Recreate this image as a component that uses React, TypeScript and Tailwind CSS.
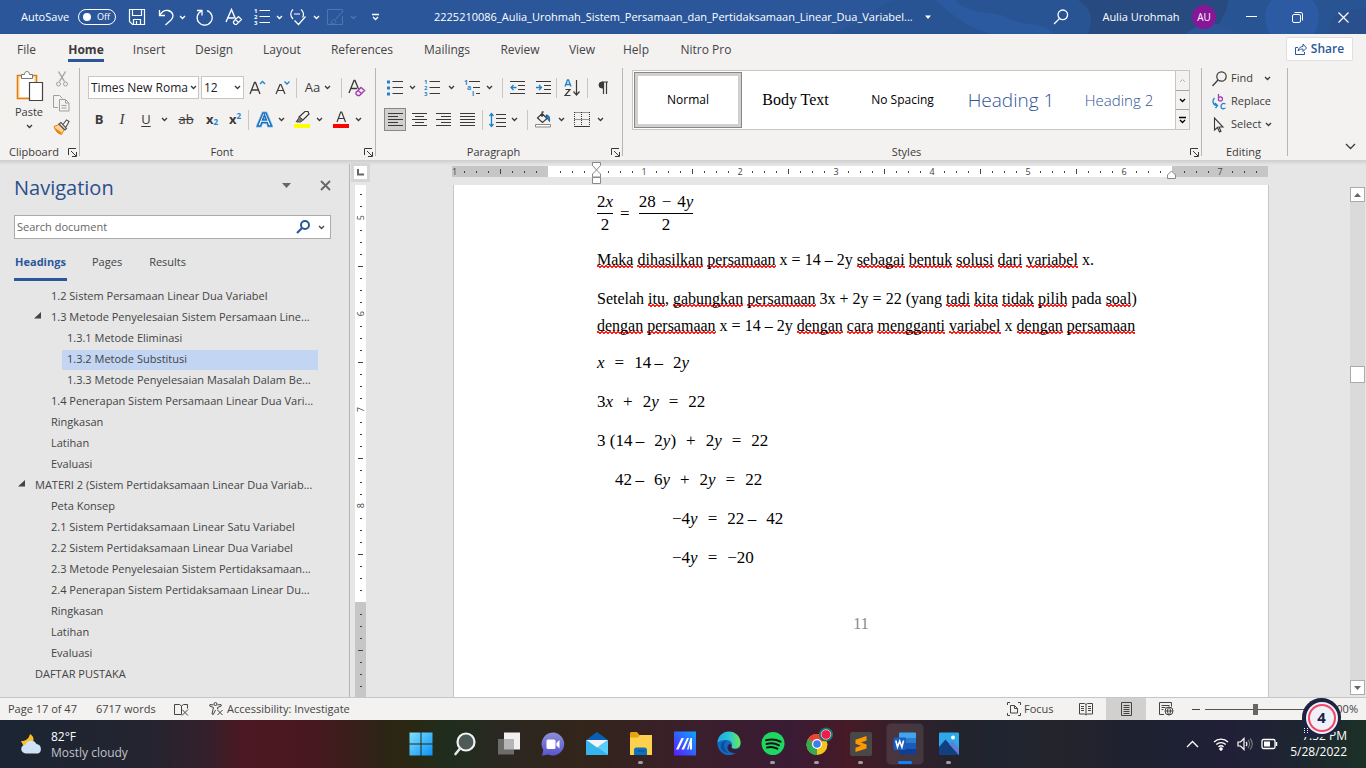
import React from "react";

type Kids = { children?: React.ReactNode };

function Svg({ w, h, children, className = "" }: { w: number; h: number; className?: string } & Kids) {
  return (
    <svg
      width={w}
      height={h}
      viewBox={`0 0 ${w} ${h}`}
      fill="none"
      stroke="currentColor"
      strokeWidth={1}
      className={`shrink-0 ${className}`}
      aria-hidden="true"
    >
      {children}
    </svg>
  );
}

function Chevron() {
  return (
    <Svg w={7} h={5}>
      <path d="M1 1l2.5 2.5L6 1" strokeWidth={1.3} />
    </Svg>
  );
}

function Btn({ label, className = "", children }: { label: string; className?: string } & Kids) {
  return (
    <button type="button" aria-label={label} className={`flex shrink-0 items-center justify-center ${className}`}>
      {children}
    </button>
  );
}

function More({ label, className = "w-2.5" }: { label: string; className?: string }) {
  return (
    <Btn label={label} className={`h-6 ${className}`}>
      <Chevron />
    </Btn>
  );
}

function Sep() {
  return <span className="h-5 w-px shrink-0 bg-[#c8c6c4]" />;
}

/* ---------- Title bar ---------- */

function TitleBar() {
  return (
    <header className="relative flex h-[34px] shrink-0 items-center overflow-hidden bg-[#2b579a] text-[11px] text-white">
      <svg className="absolute inset-y-0 right-0 h-full w-[560px]" viewBox="0 0 560 34" aria-hidden="true">
        <path d="M0 0h560v34H20C70 20 60 8 90 0z" fill="#29528f" opacity=".45" />
        <path d="M282 34c6-16 4-24-10-34h150c0 14-10 20-12 34z" fill="#274b80" />
        <circle cx="486" cy="18" r="27" fill="#2c5aa3" />
        <path d="M380 34c10-10 28-14 44-6l6 6z" fill="#2b5597" />
        <path d="M522 34c0-18 14-24 38-26v26z" fill="#29508d" />
        <path d="M150 0c10 16 40 10 52 18 10 8 40 4 44 16h-60C160 28 140 10 130 0z" fill="#2c5aa0" />
      </svg>
      <div className="relative flex h-full w-full items-center">
        <label className="flex shrink-0 items-center pl-[21px]">
          <span className="w-[57px]">AutoSave</span>
          <input type="checkbox" className="sr-only" />
          <span className="flex h-4 w-[38px] items-center gap-1.5 rounded-full border border-white pl-1 text-[9px]">
            <span className="size-2 rounded-full bg-white" />
            Off
          </span>
        </label>
        <Btn label="Save" className="h-7 w-[42px]">
          <Svg w={18} h={18}>
            <path d="M1.5 1.5h15v15h-12l-3-3zM4.500 1.500v6h9v-6M5.500 16.500v-5h7v5M8.500 16v-3" strokeWidth={1.2} />
          </Svg>
        </Btn>
        <Btn label="Undo" className="h-7 w-4">
          <Svg w={16} h={18}>
            <path d="M1.500 2v5.500H7M1.500 7.500C4 3.500 7 2 10 2.500c5 1 6.500 6 3 9.500L7.500 17" strokeWidth={1.3} />
          </Svg>
        </Btn>
        <More label="Undo options" className="w-4" />
        <Btn label="Repeat" className="h-7 w-7">
          <Svg w={18} h={18}>
            <path d="M2 2.500h5v5M6.800 2.800A7.500 7.500 0 1 0 12 2.600" strokeWidth={1.3} />
          </Svg>
        </Btn>
        <Btn label="Clear formatting" className="h-7 w-8">
          <Svg w={18} h={18}>
            <path d="M1 14L6.500 1.500 10.500 11M3 10h6" strokeWidth={1.4} />
            <path d="M8.500 13.500l5-5 3 3-5 5H10l-1.500-1.500zM10.500 11.500l3 3" strokeWidth={1.2} />
          </Svg>
        </Btn>
        <Btn label="Numbering" className="h-7 w-6">
          <NumberedGlyph accent="#fff" />
        </Btn>
        <More label="Numbering options" />
        <Btn label="Check" className="h-7 w-[27px]">
          <Svg w={18} h={18}>
            <path d="M4 1.500C1 4 1 8 4 11M12 1.500c3 2.500 3 6 1.500 8M5 6h6M5.500 12.500l4 4 7-8" strokeWidth={1.2} />
          </Svg>
        </Btn>
        <More label="Check options" />
        <div className="flex text-[#4d75b0]">
          <Btn label="Draw" className="h-7 w-7">
            <Svg w={18} h={18}>
              <path d="M16.500 8v8.500h-15v-15h15v3M16.500 3.500l-7 8M5 16c0-3 2-5 4-4s1 4-4 4z" />
            </Svg>
          </Btn>
          <More label="Draw options" className="h-7 w-2" />
        </div>
        <Btn label="Customize toolbar" className="h-7 w-[37px]">
          <Svg w={9} h={8}>
            <path d="M1 1.500h7M2 4l2.500 2.500L7 4" strokeWidth={1.3} />
          </Svg>
        </Btn>
        <button type="button" className="flex min-w-0 flex-1 items-center gap-3 pl-10">
          <span className="truncate">2225210086_Aulia_Urohmah_Sistem_Persamaan_dan_Pertidaksamaan_Linear_Dua_Variabel...</span>
          <Svg w={7} h={5}>
            <path d="M0 0.500h6L3 4z" fill="currentColor" stroke="none" />
          </Svg>
        </button>
        <Btn label="Search" className="h-7 w-8">
          <Svg w={16} h={16}>
            <circle cx="9.800" cy="5.800" r="4.800" strokeWidth={1.300} />
            <path d="M6.500 9.500L1 15" strokeWidth={1.300} />
          </Svg>
        </Btn>
        <button type="button" className="flex shrink-0 items-center gap-[11px] pr-3 pl-6">
          <span className="w-20 whitespace-nowrap">Aulia Urohmah</span>
          <span className="flex size-6 items-center justify-center rounded-full bg-[#881798] text-[10px]">AU</span>
        </button>
        <Btn label="Minimize" className="h-full w-[46px]">
          <Svg w={11} h={11}>
            <path d="M0 4.500h11" strokeWidth={1} />
          </Svg>
        </Btn>
        <Btn label="Restore" className="h-full w-[46px]">
          <Svg w={11} h={11}>
            <path d="M.5 4a1.500 1.500 0 0 1 1.500-1.500h5A1.500 1.500 0 0 1 8.500 4v5A1.500 1.500 0 0 1 7 10.500H2A1.500 1.500 0 0 1 .5 9zM2.500.5H9A1.500 1.500 0 0 1 10.500 2v6.500" />
          </Svg>
        </Btn>
        <Btn label="Close" className="h-full w-[46px]">
          <Svg w={11} h={11}>
            <path d="M.5.5l10 10M10.500.5l-10 10" strokeWidth={1.200} />
          </Svg>
        </Btn>
      </div>
    </header>
  );
}

/* ---------- Ribbon tabs ---------- */

const tabs: [string, string][] = [
  ["File", "w-[53px]"],
  ["Home", "w-[66px]"],
  ["Insert", "w-[60px]"],
  ["Design", "w-[70px]"],
  ["Layout", "w-[66px]"],
  ["References", "w-[94px]"],
  ["Mailings", "w-[76px]"],
  ["Review", "w-[70px]"],
  ["View", "w-[54px]"],
  ["Help", "w-[54px]"],
  ["Nitro Pro", "w-[86px]"],
];

function RibbonTabs() {
  return (
    <nav className="flex h-8 shrink-0 items-start text-[12px]">
      {tabs.map(([name, width]) => (
        <button type="button" key={name} className={`flex h-8 shrink-0 justify-center ${width}`}>
          <span className={`h-7 pt-[7px] ${name === "Home" ? "border-b-[3px] border-[#2b579a] font-bold text-[#3b3a39]" : ""}`}>
            {name}
          </span>
        </button>
      ))}
      <button
        type="button"
        className="mt-[3px] mr-[13px] ml-auto flex h-6 w-[67px] items-center justify-center gap-1 rounded-xs border border-[#e1dfdd] bg-white font-semibold text-[#2b579a]"
      >
        <Svg w={12} h={12}>
          <path d="M3 4.500H.5v7h9V9M3 8c.5-3 2.500-4.500 5-4.500V1l3.500 4L8 8.500V6C6 6 4.500 6.500 3 8z" />
        </Svg>
        Share
      </button>
    </nav>
  );
}

/* ---------- Ribbon ---------- */

function Group({
  title,
  launcher = true,
  className = "",
  children,
}: { title: string; launcher?: boolean; className?: string } & Kids) {
  return (
    <section className={`flex flex-col ${className}`}>
      <div className="min-h-0 flex-1">{children}</div>
      <div className="flex h-4 items-center pr-0.5">
        <span className={`flex-1 text-center whitespace-nowrap ${launcher ? "-mr-1" : ""}`}>{title}</span>
        {launcher && (
          <button type="button" aria-label={`${title} settings`} className="ml-1">
            <Svg w={9} h={9}>
              <path d="M.5 7V.5H8M3 3l5 5M8.500 4v4.500H4" />
            </Svg>
          </button>
        )}
      </div>
    </section>
  );
}

function Divider() {
  return <span className="mt-0.5 h-[88px] w-px shrink-0 bg-[#b8b6b4]" />;
}

function NumberedGlyph({ accent }: { accent: string }) {
  return (
    <svg width="17" height="20" viewBox="0 0 17 20" aria-hidden="true">
      <path d="M5.500 3.500H16M5.500 9.500H16M5.500 15.500H16" stroke="currentColor" />
      <g fill={accent} fontSize="6" fontWeight="bold" fontFamily="Open Sans, sans-serif">
        <text x="0" y="6">1</text>
        <text x="0" y="12">2</text>
        <text x="0" y="18">3</text>
      </g>
    </svg>
  );
}

function Lines({ xs }: { xs: [number, number][] }) {
  return (
    <Svg w={15} h={15}>
      {xs.map(([a, b], i) => (
        <path key={i} d={`M${a} ${i * 3 + 1.5}H${b}`} />
      ))}
    </Svg>
  );
}

function Eraser() {
  return (
    <Svg w={18} h={18}>
      <path d="M1 14L6 1.500h1L10.500 10M3 9.500h6" strokeWidth={1.300} />
      <path d="M8 13.500l5-5 3.500 3-5 5H9.500L8 15zM10 11.500l3.500 3" stroke="#a43cb0" strokeWidth={1.400} />
    </Svg>
  );
}

function ClipboardGroup() {
  return (
    <Group title="Clipboard" className="w-[79px]">
      <div className="flex h-full">
        <button type="button" className="flex w-[58px] flex-col items-center pt-1">
          <Svg w={30} h={34}>
            <path d="M3.500 5.500h19v23h-19z" fill="#fce8c4" stroke="#e27f0c" strokeWidth={1.600} />
            <path d="M6 8h14v19H6z" fill="#fff" stroke="none" />
            <path d="M7.500 8.500v-4h3c0-4 5-4 5 0h3v4z" fill="#fff" stroke="#777" />
            <path d="M15.500 12.500h13v18h-13z" fill="#fff" stroke="#444" strokeWidth={1.200} />
          </Svg>
          <span className="leading-4">Paste</span>
          <span className="flex h-3 items-center">
            <Chevron />
          </span>
        </button>
        <div className="flex w-[7px] flex-col items-center gap-1.5 pt-1 text-[#a19f9d]">
          <Btn label="Cut" className="h-[18px] w-5">
            <Svg w={12} h={16}>
              <path d="M2.500.5l6 10M9.500.5l-6 10" strokeWidth={1.300} />
              <circle cx="2.500" cy="13" r="2" />
              <circle cx="9.500" cy="13" r="2" />
            </Svg>
          </Btn>
          <Btn label="Copy" className="h-[18px] w-5">
            <Svg w={17} h={17}>
              <path d="M5 12.500H.5V.5h6l3 3M6.500 4.500h6l3.500 3.500v8H6.500zM12.500 4.500V8H16M8.500 10.500h5M8.500 13h5" />
            </Svg>
          </Btn>
          <Btn label="Format Painter" className="h-[18px] w-5">
            <Svg w={17} h={16}>
              <path d="M1 7.500l5-2 5 5.500-2.500 4.500C5 14.500 2 11.500 1 7.500z" fill="#fbd59b" stroke="#e27f0c" />
              <path d="M2 9l6.500 4.500-1 2C4 14 2.500 12 2 9z" fill="#e8820c" stroke="none" />
              <path d="M6 5l2-1.500 5.500 6L12 11zM10 5.500l3.500-4.500 2.500 1.500-3 5.500" fill="#fff" stroke="#555" strokeWidth={1.200} />
            </Svg>
          </Btn>
        </div>
      </div>
    </Group>
  );
}

function FontGroup() {
  return (
    <Group title="Font" className="w-[295px]">
      <div className="flex h-8 items-center pt-[11px] pl-2">
        <label className="relative flex h-[23px] w-28 items-center">
          <span className="sr-only">Font name</span>
          <select className="h-[23px] w-[111px] appearance-none border border-[#c8c6c4] bg-white pl-0.5 text-[12px] leading-4 text-[#222]">
            <option>Times New Roma</option>
          </select>
          <span className="pointer-events-none absolute right-[3px] bg-white">
            <Chevron />
          </span>
        </label>
        <label className="relative ml-px flex h-[23px] w-[43px] items-center">
          <span className="sr-only">Font size</span>
          <select className="h-[23px] w-[43px] appearance-none border border-[#c8c6c4] bg-white pl-0.5 text-[12px] leading-4 text-[#222]">
            <option>12</option>
          </select>
          <span className="pointer-events-none absolute right-[3px]">
            <Chevron />
          </span>
        </label>
        <Btn label="Grow font" className="h-6 w-[26px]">
          <Svg w={17} h={16}>
            <path d="M1 14L5.500 2.500h1L11 14M2.800 10h6.500" strokeWidth={1.300} />
            <path d="M11 4l2.500-2.500L16 4" stroke="#1e83cc" strokeWidth={1.300} />
          </Svg>
        </Btn>
        <Btn label="Shrink font" className="h-6 w-6">
          <Svg w={15} h={16}>
            <path d="M1 14L5 4.500h1L10 14M2.800 10.500h5.500" strokeWidth={1.200} />
            <path d="M9.500 1.500L12 4l2.500-2.500" stroke="#1e83cc" strokeWidth={1.300} />
          </Svg>
        </Btn>
        <span className="w-0.5" />
        <Sep />
        <button type="button" className="flex h-6 w-[42px] items-center justify-center gap-1 text-[13px]">
          Aa
          <Chevron />
        </button>
        <span className="w-0.5" />
        <Sep />
        <Btn label="Clear all formatting" className="h-6 w-[30px]">
          <Eraser />
        </Btn>
      </div>
      <div className="flex h-8 items-center pt-[11px] pl-2 text-[13px]">
        <Btn label="Bold" className="h-6 w-[22px] font-bold">B</Btn>
        <Btn label="Italic" className="h-6 w-6">
          <span className="font-['Liberation_Serif',serif] text-[15px] italic">I</span>
        </Btn>
        <Btn label="Underline" className="h-6 w-6">
          <span className="underline underline-offset-2">U</span>
        </Btn>
        <More label="Underline style" className="w-3" />
        <Btn label="Strikethrough" className="h-6 w-8">
          <span className="line-through">ab</span>
        </Btn>
        <Btn label="Subscript" className="h-6 w-5 font-bold">
          x<sub className="text-[8px] text-[#1e83cc]">2</sub>
        </Btn>
        <Btn label="Superscript" className="h-6 w-[26px] font-bold">
          x<sup className="text-[8px] text-[#1e83cc]">2</sup>
        </Btn>
        <Sep />
        <span className="w-0.5" />
        <Btn label="Text effects" className="h-6 w-[26px]">
          <Svg w={17} h={17}>
            <path d="M1.500 15L7 2h3l5.500 13h-3l-1.300-3.500H5.800L4.500 15zM6.500 9h4L8.500 4z" fill="#fff" stroke="#8cc4ee" strokeWidth={3} />
            <path d="M1.500 15L7 2h3l5.500 13h-3l-1.300-3.500H5.800L4.500 15zM6.500 9h4L8.500 4z" fill="#fff" stroke="#1b70b8" strokeWidth={1.500} />
          </Svg>
        </Btn>
        <More label="Text effects options" className="w-2" />
        <span className="w-[5px]" />
        <Btn label="Highlight" className="h-6 w-6">
          <Svg w={17} h={17}>
            <path d="M0 13h16v4H0z" fill="#ff0" stroke="none" />
            <path d="M2 11l2-2.500M5 6l6-5.500h3L15 3 9 9z" strokeWidth={1.200} />
            <path d="M4 8l1.500-2 3.500 3-2 2H3z" fill="#777" stroke="#555" />
          </Svg>
        </Btn>
        <More label="Highlight color" />
        <span className="w-[5px]" />
        <Btn label="Font color" className="h-6 w-6">
          <Svg w={17} h={17}>
            <path d="M0 13h16v4H0z" fill="#f00" stroke="none" />
            <path d="M4 11L7.700 1h1L12.500 11M5.300 7.500h6" strokeWidth={1.200} />
          </Svg>
        </Btn>
        <More label="Font color options" />
      </div>
    </Group>
  );
}

function ParagraphGroup() {
  const blue = "#1e83cc";
  return (
    <Group title="Paragraph" className="w-[246px]">
      <div className="flex h-8 items-center pt-[11px] pl-2">
        <Btn label="Bullets" className="h-6 w-[22px]">
          <Svg w={16} h={16}>
            <path d="M0 .5h3v3H0zM0 6.500h3v3H0zM0 12.500h3v3H0z" fill={blue} stroke="none" />
            <path d="M5.500 1.500H16M5.500 7.500H16M5.500 13.500H16" />
          </Svg>
        </Btn>
        <More label="Bullet options" className="w-3" />
        <Btn label="Numbering" className="h-6 w-7">
          <NumberedGlyph accent={blue} />
        </Btn>
        <More label="Numbering options" />
        <span className="w-1" />
        <Btn label="Multilevel list" className="h-6 w-6">
          <svg width="17" height="20" viewBox="0 0 17 20" aria-hidden="true">
            <path d="M5 3.500H16M9 9.500H16M12 15.500h4" stroke="currentColor" />
            <g fill={blue} fontSize="7" fontWeight="bold" fontFamily="Open Sans, sans-serif">
              <text x="0" y="7">1</text>
              <text x="3" y="12">a</text>
              <text x="8" y="18">i</text>
            </g>
          </svg>
        </Btn>
        <More label="Multilevel options" />
        <span className="w-2" />
        <Sep />
        <Btn label="Decrease indent" className="h-6 w-7">
          <Svg w={15} h={14}>
            <path d="M0 .5h15M8 4.500h7M8 8.500h7M0 12.500h15" />
            <path d="M6.500 6.500H1M3.500 4L1 6.500 3.500 9" stroke={blue} strokeWidth={1.300} />
          </Svg>
        </Btn>
        <Btn label="Increase indent" className="h-6 w-6">
          <Svg w={15} h={14}>
            <path d="M0 .5h15M8 4.500h7M8 8.500h7M0 12.500h15" />
            <path d="M0 6.500h5.500M3 4l2.500 2.500L3 9" stroke={blue} strokeWidth={1.300} />
          </Svg>
        </Btn>
        <span className="w-px" />
        <Sep />
        <Btn label="Sort" className="h-6 w-[30px]">
          <Svg w={17} h={18}>
            <path d="M1 7.500L3.500 1h1L7 7.500M2 5.500h4" stroke={blue} strokeWidth={1.300} />
            <path d="M1.500 10.500h4.500l-5 6h5.500M12.500 1v15M9.500 12.500l3 3.500 3-3.500" strokeWidth={1.200} />
          </Svg>
        </Btn>
        <Sep />
        <Btn label="Show paragraph marks" className="h-6 w-[30px]">
          <Svg w={10} h={14}>
            <path d="M5 7H4a3 3 0 0 1 0-6h1z" fill="currentColor" />
            <path d="M4 1h6M5.500 1v12M8.500 1v12" strokeWidth={1.200} />
          </Svg>
        </Btn>
      </div>
      <div className="flex h-8 items-center pt-[11px] pl-2">
        <Btn label="Align left" className="h-[23px] w-[22px] border border-[#8a8886] bg-[#d2d0ce]">
          <Lines xs={[[0, 15], [0, 10], [0, 15], [0, 10], [0, 15]]} />
        </Btn>
        <span className="w-px" />
        <Btn label="Center" className="h-6 w-6">
          <Lines xs={[[0, 15], [3, 12], [0, 15], [3, 12], [0, 15]]} />
        </Btn>
        <Btn label="Align right" className="h-6 w-6">
          <Lines xs={[[0, 15], [5, 15], [0, 15], [5, 15], [0, 15]]} />
        </Btn>
        <Btn label="Justify" className="h-6 w-6">
          <Lines xs={[[0, 15], [0, 15], [0, 15], [0, 15], [0, 15]]} />
        </Btn>
        <span className="w-[3px]" />
        <Sep />
        <span className="w-0.5" />
        <Btn label="Line spacing" className="h-6 w-6">
          <Svg w={17} h={16}>
            <path d="M7 2.500h10M7 6.500h10M7 10.500h10M7 14.500h10" />
            <path d="M2.500 1.500v13M.5 4l2-2.500 2 2.500M.5 12l2 2.500 2-2.500" stroke={blue} strokeWidth={1.300} />
          </Svg>
        </Btn>
        <More label="Line spacing options" />
        <span className="w-2" />
        <Sep />
        <span className="w-0.5" />
        <Btn label="Shading" className="h-6 w-[26px]">
          <Svg w={17} h={17}>
            <path d="M.5 13.500h15v2.500H.5z" fill="#fff" stroke="#888" />
            <path d="M7 2.500l5 5-4.500 4L2.500 7zM7 6V1.500c0-1 1.500-1 1.500 0" strokeWidth={1.200} />
            <path d="M11 4c3 0 4 2 3.500 6.500L12 7z" fill={blue} stroke="#1b5f99" />
          </Svg>
        </Btn>
        <More label="Shading options" />
        <span className="w-[3px]" />
        <Btn label="Borders" className="h-6 w-[26px]">
          <Svg w={16} h={16}>
            <path d="M.5.5h15M.5 7.500h15M.5 0v14M7.500 0v14M15.500 0v14" strokeDasharray="1 1" />
            <path d="M0 14.500h16" />
          </Svg>
        </Btn>
        <More label="Border options" />
      </div>
    </Group>
  );
}

function StylesGroup() {
  return (
    <Group title="Styles" className="min-w-0 flex-1">
      <div className="mt-1 mr-[11px] ml-[9px] flex h-[60px] border border-[#c8c6c4] bg-white text-[12px] text-black">
        <button type="button" className="m-px w-[108px] shrink-0 border border-[#8a8886] bg-[#d0d0d0] p-[3px]">
          <span className="flex h-full items-center justify-center bg-white">Normal</span>
        </button>
        <div className="flex min-w-0 flex-1 items-center overflow-hidden whitespace-nowrap">
          <button type="button" className="w-[105px] shrink-0 font-['Liberation_Serif',serif] text-[16px]">Body Text</button>
          <button type="button" className="w-[109px] shrink-0">No Spacing</button>
          <button type="button" className="w-[108px] shrink-0 text-[19px] font-light text-[#2f5496]">Heading 1</button>
          <button type="button" className="w-[108px] shrink-0 text-[15px] font-light text-[#2f5496]">Heading 2</button>
        </div>
        <div className="flex w-3.5 shrink-0 flex-col border-l border-[#c8c6c4] bg-[#f3f2f1]">
          <Btn label="Scroll up" className="flex-1 text-[#b3b0ad]">
            <Svg w={7} h={5}>
              <path d="M1 4l2.500-2.500L6 4" />
            </Svg>
          </Btn>
          <Btn label="Scroll down" className="flex-1 border-y border-[#a6a4a2]">
            <Chevron />
          </Btn>
          <Btn label="More styles" className="flex-1">
            <Svg w={7} h={8}>
              <path d="M0 1.500h7M1 4l2.500 2.500L6 4" strokeWidth={1.300} />
            </Svg>
          </Btn>
        </div>
      </div>
    </Group>
  );
}

function EditingGroup() {
  return (
    <Group title="Editing" launcher={false} className="w-[85px]">
      <div className="flex flex-col pt-px pl-2.5">
        <button type="button" className="flex h-[23px] items-center gap-1">
          <Svg w={15} h={16}>
            <circle cx="9.500" cy="5.500" r="4.700" strokeWidth={1.200} />
            <path d="M6 9L.5 15" strokeWidth={1.300} />
          </Svg>
          <span className="w-[29px] text-left">Find</span>
          <Chevron />
        </button>
        <button type="button" className="flex h-[23px] items-center gap-1">
          <Svg w={15} h={16}>
            <path d="M6.500 0v7M6.500 4c1-1.500 4-1.500 4 1s-3 2.500-4 1" stroke="#a43cb0" strokeWidth={1.300} />
            <path d="M2.500 4C0 6.500.5 11 5 11.500M3 9l2.500 2.500L3.500 14M13.500 10c-3-1.500-4.500.5-4.500 2.500s2 3 4.500 1.500" stroke="#1e83cc" strokeWidth={1.300} />
          </Svg>
          Replace
        </button>
        <button type="button" className="flex h-[23px] items-center gap-1">
          <Svg w={15} h={16}>
            <path d="M2.500 1v12l3-2.500 2 4.500 1.500-.8-2-4.200h4z" strokeWidth={1.100} />
          </Svg>
          <span>Select</span>
          <Chevron />
        </button>
      </div>
    </Group>
  );
}

/* ---------- Navigation pane ---------- */

type Entry = { text: string; level: "pl-[35px]" | "pl-[51px]" | "pl-[67px]"; open?: boolean; active?: boolean };

const outline: Entry[] = [
  { text: "1.2 Sistem Persamaan Linear Dua Variabel", level: "pl-[51px]" },
  { text: "1.3 Metode Penyelesaian Sistem Persamaan Line...", level: "pl-[51px]", open: true },
  { text: "1.3.1 Metode Eliminasi", level: "pl-[67px]" },
  { text: "1.3.2 Metode Substitusi", level: "pl-[67px]", active: true },
  { text: "1.3.3 Metode Penyelesaian Masalah Dalam Be...", level: "pl-[67px]" },
  { text: "1.4 Penerapan Sistem Persamaan Linear Dua Vari...", level: "pl-[51px]" },
  { text: "Ringkasan", level: "pl-[51px]" },
  { text: "Latihan", level: "pl-[51px]" },
  { text: "Evaluasi", level: "pl-[51px]" },
  { text: "MATERI 2 (Sistem Pertidaksamaan Linear Dua Variab...", level: "pl-[35px]", open: true },
  { text: "Peta Konsep", level: "pl-[51px]" },
  { text: "2.1 Sistem Pertidaksamaan Linear Satu Variabel", level: "pl-[51px]" },
  { text: "2.2 Sistem Pertidaksamaan Linear Dua Variabel", level: "pl-[51px]" },
  { text: "2.3 Metode Penyelesaian Sistem Pertidaksamaan...", level: "pl-[51px]" },
  { text: "2.4 Penerapan Sistem Pertidaksamaan Linear Du...", level: "pl-[51px]" },
  { text: "Ringkasan", level: "pl-[51px]" },
  { text: "Latihan", level: "pl-[51px]" },
  { text: "Evaluasi", level: "pl-[51px]" },
  { text: "DAFTAR PUSTAKA", level: "pl-[35px]" },
];

function NavigationPane() {
  return (
    <aside className="mt-1 flex w-[350px] shrink-0 flex-col border-r border-[#b5b5b5] text-[11px] text-[#444]">
      <div className="flex h-[51px] items-center pr-4 pb-1 pl-3.5">
        <h2 className="flex-1 text-[20px] leading-6 text-[#2b4f8c]">Navigation</h2>
        <Btn label="Pane options" className="mb-1 h-6 w-[45px] pr-4 text-[#666]">
          <Svg w={9} h={5}>
            <path d="M0 0h9L4.500 5z" fill="currentColor" stroke="none" />
          </Svg>
        </Btn>
        <Btn label="Close pane" className="mb-1 h-6 w-4 text-[#666]">
          <Svg w={11} h={11}>
            <path d="M1 1l9 9M10 1l-9 9" strokeWidth={1.800} />
          </Svg>
        </Btn>
      </div>
      <div className="mr-[18px] ml-3.5 flex h-6 shrink-0 items-center border border-[#ababab] bg-white pr-[3px]">
        <input
          type="search"
          aria-label="Search document"
          placeholder="Search document"
          className="min-w-0 flex-1 bg-transparent pl-0.5 outline-none placeholder:text-[#666]"
        />
        <Btn label="Search" className="w-6 text-[#2b579a]">
          <Svg w={15} h={14}>
            <circle cx="9" cy="5" r="4" strokeWidth={2} />
            <path d="M6 8l-5 5" strokeWidth={2.200} />
          </Svg>
        </Btn>
        <More label="Search options" className="w-3" />
      </div>
      <div className="flex h-[47px] shrink-0 items-end pb-[5px] pl-3.5">
        <button type="button" className="mr-[25px] h-[31px] w-[53px] border-b-[3px] border-[#2b579a] pb-1 font-bold whitespace-nowrap text-[#2b579a]">
          Headings
        </button>
        <button type="button" className="mr-[27px] h-[31px] border-b-[3px] border-transparent pb-1">Pages</button>
        <button type="button" className="h-[31px] border-b-[3px] border-transparent pb-1">Results</button>
      </div>
      <ul>
        {outline.map((e, i) => (
          <li key={i} className={`flex h-[21px] items-center ${e.level}`}>
            {e.open && (
              <span className="-ml-[17px] w-[17px]">
                <Svg w={8} h={7} className="mb-1">
                  <path d="M7 0v6.500H0z" fill="#444" stroke="none" />
                </Svg>
              </span>
            )}
            {e.active ? (
              <a href="#substitusi" className="mr-[31px] -ml-[5px] flex h-5 flex-1 items-center bg-[#c2d5f2] pl-[5px]">
                {e.text}
              </a>
            ) : (
              <a href="#outline" className="whitespace-nowrap">
                {e.text}
              </a>
            )}
          </li>
        ))}
      </ul>
    </aside>
  );
}

/* ---------- Document ---------- */

function rulerFill(i: number) {
  if (i === 8) return "w-3 justify-center bg-linear-to-r from-[#c6c6c6] from-50% to-white to-50%";
  if (i === 60) return "w-3 justify-center bg-linear-to-r from-white from-50% to-[#c6c6c6] to-50%";
  if (i === 0) return "w-1.5 justify-start bg-[#c6c6c6]";
  return i < 8 || i > 60 ? "w-3 justify-center bg-[#c6c6c6]" : "w-3 justify-center bg-white";
}

function HorizontalRuler() {
  const cells = Array.from({ length: 68 }, (_, i) => i);
  return (
    <div className="flex h-[25px] shrink-0 items-center justify-center pr-0.5 pb-0.5">
      <div className="relative flex h-[11px] text-[9px] text-[#444]">
        {cells.map((i) => {
          const n = i === 0 ? 1 : i % 8 === 0 && i > 8 ? i / 8 - 1 : null;
          return (
            <span key={i} className={`flex items-center ${rulerFill(i)}`}>
              {n !== null ? (
                n
              ) : i === 8 || i === 12 || i === 60 ? null : i % 4 === 0 ? (
                <span className="h-[5px] w-px bg-[#444]" />
              ) : (
                <span className="h-0.5 w-px bg-[#444]" />
              )}
            </span>
          );
        })}
        <span className="w-1.5 bg-[#c6c6c6]" />
        <Svg w={11} h={23} className="absolute -top-1 left-[139px] text-[#888]">
          <path d="M1.500.5h8v3L5.500 8l4 4v3h-8v-3l4-4-4-4.500zM1.500 15.500h8v6h-8z" fill="#fff" />
        </Svg>
        <Svg w={11} h={9} className="absolute top-1 right-[91px] text-[#888]">
          <path d="M1.500 8.500V5l4-4 4 4v3.500z" fill="#fff" />
        </Svg>
      </div>
    </div>
  );
}

function VerticalRuler() {
  const cells = Array.from({ length: 42 }, (_, i) => i);
  return (
    <div className="flex w-[21px] shrink-0 flex-col items-center">
      <div className="flex h-[25px] items-center">
        <button type="button" aria-label="Tab selector" className="flex size-[19px] items-center justify-center border-[3px] border-[#d6d6d6] bg-white">
          <Svg w={7} h={7} className="text-[#666]">
            <path d="M1 0v5.500h6" strokeWidth={2} />
          </Svg>
        </button>
      </div>
      <div className="flex min-h-0 w-[11px] flex-1 flex-col overflow-hidden bg-white pt-[3px] text-[9px] text-[#444]">
        {cells.map((i) => (
          <span
            key={i}
            className={`flex h-3 shrink-0 items-center justify-center ${i === 34 ? "bg-linear-to-b from-white from-50% to-[#c6c6c6] to-50%" : i > 34 ? "bg-[#c6c6c6]" : ""}`}
          >
            {i === 34 ? null : i % 8 === 2 ? (
              <span className="-rotate-90">{(i - 2) / 8 + 5}</span>
            ) : i % 8 === 6 ? (
              <span className="h-px w-[5px] bg-[#444]" />
            ) : (
              <span className="h-px w-0.5 bg-[#444]" />
            )}
          </span>
        ))}
        <span className="flex-1 bg-[#c6c6c6]" />
      </div>
    </div>
  );
}

/* Words wrapped in asterisks are flagged by the spelling checker. */
function Prose({ text }: { text: string }) {
  return (
    <>
      {text.split("*").map((part, i) =>
        i % 2 ? (
          <span
            key={i}
            className="bg-[linear-gradient(45deg,transparent_30%,#ff2020_30%,#ff2020_60%,transparent_60%),linear-gradient(135deg,transparent_30%,#ff2020_30%,#ff2020_60%,transparent_60%)] bg-[length:4px_3px,4px_3px] bg-[position:0_100%,2px_100%] bg-repeat-x"
          >
            {part}
          </span>
        ) : (
          <span key={i}>{part}</span>
        ),
      )}
    </>
  );
}

function Tokens({ parts }: { parts: string[] }) {
  return (
    <>
      {parts.map((p, i) => (
        <span key={i} className="whitespace-pre">
          {p.split(/([xy])/).map((c, k) => (c === "x" || c === "y" ? <em key={k}>{c}</em> : c))}
        </span>
      ))}
    </>
  );
}

function MathLine({ parts, className = "" }: { parts: string[]; className?: string }) {
  return (
    <p className={`flex h-7 items-center gap-2.5 ${className}`}>
      <Tokens parts={parts} />
    </p>
  );
}

function Fraction({ top, bottom }: { top: string[]; bottom: string }) {
  return (
    <span className="flex flex-col items-center leading-[22px]">
      <span className="flex gap-1.5 border-b border-black">
        <Tokens parts={top} />
      </span>
      <span>{bottom}</span>
    </span>
  );
}

function Page() {
  return (
    <article className="mx-auto flex w-[816px] flex-1 flex-col border-x border-[#c6c6c6] bg-white px-[143px] pt-1.5 font-['Liberation_Serif',serif] text-[16px] text-black">
      <div className="flex items-center gap-[7px] text-[17px]">
        <Fraction top={["2x"]} bottom="2" />
        <span>=</span>
        <span className="pl-0.5">
          <Fraction top={["28", "−", "4y"]} bottom="2" />
        </span>
      </div>
      <p className="mt-2.5 leading-7 whitespace-nowrap">
        <Prose text="*Maka* *dihasilkan* *persamaan* x = 14 – 2y *sebagai* *bentuk* *solusi* *dari* *variabel* x." />
      </p>
      <p className="mt-[11px] leading-[27px] whitespace-nowrap">
        <Prose text="Setelah *itu*, *gabungkan* *persamaan* 3x + 2y = 22 (yang *tadi* *kita* *tidak* *pilih* pada *soal*)" />
        <br />
        <Prose text="*dengan* *persamaan* x = 14 – 2y *dengan* *cara* *mengganti* *variabel* x *dengan* *persamaan*" />
      </p>
      <div className="mt-2.5 flex flex-col gap-[11px] text-[17px]">
        <MathLine parts={["x", "=", "14\u2009–", "2y"]} />
        <MathLine parts={["3x", "+", "2y", "=", "22"]} />
        <MathLine parts={["3 (14\u2009–", "2y)", "+", "2y", "=", "22"]} />
        <MathLine parts={["42\u2009–", "6y", "+", "2y", "=", "22"]} className="pl-[18px]" />
        <MathLine parts={["−4y", "=", "22\u2009–", "42"]} className="pl-[75px]" />
        <MathLine parts={["−4y", "=", "−20"]} className="pl-[75px]" />
      </div>
      <p className="mt-10 text-center leading-6 text-[#8a8a8a]">11</p>
    </article>
  );
}

function DocumentArea() {
  return (
    <main className="flex min-w-0 flex-1">
      <VerticalRuler />
      <div className="flex min-w-0 flex-1 flex-col pl-[3px]">
        <HorizontalRuler />
        <Page />
      </div>
      <div className="flex w-[18px] flex-col items-end pt-[27px] pr-px pb-0.5">
        <Btn label="Scroll up" className="size-[15px] border border-[#ababab] bg-white text-[#666]">
          <Svg w={7} h={4}>
            <path d="M0 4h7L3.500 0z" fill="currentColor" stroke="none" />
          </Svg>
        </Btn>
        <div className="w-[15px] flex-1 bg-[#dadada] pt-[164px]">
          <div className="h-[17px] w-[15px] border border-[#ababab] bg-white" />
        </div>
        <Btn label="Scroll down" className="size-[15px] border border-[#ababab] bg-white text-[#666]">
          <Svg w={7} h={4}>
            <path d="M0 0h7L3.500 4z" fill="currentColor" stroke="none" />
          </Svg>
        </Btn>
      </div>
    </main>
  );
}

/* ---------- Status bar ---------- */

function StatusBar() {
  return (
    <footer className="flex h-[23px] shrink-0 items-center border-t border-[#c6c6c6] bg-[#f3f2f1] pl-2 text-[11px] text-[#444]">
      <button type="button" className="w-[88px] text-left">Page 17 of 47</button>
      <button type="button" className="w-[78px] text-left">6717 words</button>
      <Btn label="Proofing" className="mr-5">
        <Svg w={15} h={13}>
          <path d="M7.500 11.500h-7v-10h5l2 1.500 2-1.500h4v4M7.500 3v8.500M8 6.500l6 6M14 6.500l-6 6" />
        </Svg>
      </Btn>
      <button type="button" className="flex items-center gap-[3px]">
        <Svg w={15} h={14}>
          <circle cx="6.500" cy="2" r="1.500" />
          <path d="M4.500 3L1 2.500l-.3 1.500L4.500 5.500 3 12l1.300.5 2.200-4.500M8.500 3l3.500-.5.300 1.500L8.500 5.500l.3 2M8.500 8l5 5M13.500 8l-5 5" />
        </Svg>
        Accessibility: Investigate
      </button>
      <div className="ml-auto flex h-full items-center pr-2">
        <button type="button" className="flex w-[59px] items-center gap-[3px]">
          <Svg w={14} h={14}>
            <path d="M3 .5H.5V3M11 .5h2.500V3M.5 11v2.500H3M13.500 11v2.500H11M3.500 3.500h4l3 3v4.500h-7zM7.500 3.500v3h3" />
          </Svg>
          Focus
        </button>
        <Btn label="Read mode" className="h-full w-10">
          <Svg w={14} h={13}>
            <path d="M7 1.500v10.500M.5.500h5L7 1.500 8.500.500h5v10.500H8.500L7 12l-1.500-1H.5zM2 3.500h3M2 5.500h3M2 7.500h3M9 3.500h3M9 5.500h3M9 7.500h3" />
          </Svg>
        </Btn>
        <Btn label="Print layout" className="h-full w-10 bg-[#d2d0ce]">
          <Svg w={11} h={14}>
            <path d="M.5.5h10v13H.5zM2.500 3.500h6M2.500 5.500h6M2.500 7.500h6M2.500 9.500h6M2.500 11.500h6" />
          </Svg>
        </Btn>
        <Btn label="Web layout" className="h-full w-10">
          <Svg w={15} h={14}>
            <path d="M5 12.500H.5V.5h12v4M2.500 3.500h8M2.500 5.500h4M2.500 7.500h2" />
            <circle cx="10" cy="9" r="4" />
            <path d="M6 9h8M10 5c-2 2.500-2 5.500 0 8M10 5c2 2.500 2 5.500 0 8" />
          </Svg>
        </Btn>
        <Btn label="Zoom out" className="w-[19px]">
          <Svg w={8} h={3}>
            <path d="M0 1.500h8" />
          </Svg>
        </Btn>
        <input
          type="range"
          aria-label="Zoom"
          defaultValue={50}
          className="h-[11px] w-[101px] appearance-none bg-[linear-gradient(#555,#555)] bg-[length:100%_1px] bg-center bg-no-repeat [&::-webkit-slider-thumb]:h-[11px] [&::-webkit-slider-thumb]:w-[5px] [&::-webkit-slider-thumb]:appearance-none [&::-webkit-slider-thumb]:bg-[#666]"
        />
        <button type="button" className="w-[52px] text-right">100%</button>
      </div>
    </footer>
  );
}

/* ---------- Taskbar ---------- */

function Ico({ children }: Kids) {
  return (
    <svg width="26" height="26" viewBox="0 0 26 26" fill="none" aria-hidden="true">
      {children}
    </svg>
  );
}

const apps: { name: string; running?: boolean; active?: boolean; icon: React.ReactNode }[] = [
  {
    name: "Start",
    icon: (
      <Ico>
        <defs>
          <linearGradient id="win" x1="0" y1="0" x2="1" y2="1">
            <stop stopColor="#7fe0ff" />
            <stop offset="1" stopColor="#0a93f5" />
          </linearGradient>
        </defs>
        <path d="M1.500 1.500h11v11h-11zM13.500 1.500h11v11h-11zM1.500 13.500h11v11h-11zM13.500 13.500h11v11h-11z" fill="url(#win)" />
      </Ico>
    ),
  },
  {
    name: "Search",
    icon: (
      <Ico>
        <circle cx="14" cy="11" r="8.500" fill="#4d5a58" stroke="#f2f2f2" strokeWidth="2.200" />
        <path d="M8 17.500L3.500 23" stroke="#e6e6e6" strokeWidth="2.600" strokeLinecap="round" />
      </Ico>
    ),
  },
  {
    name: "Task view",
    icon: (
      <Ico>
        <path d="M8 1.500h16v17H8z" fill="#f1f1f1" />
        <path d="M2 8h16v15.500H2z" fill="#6b6b6b" />
        <path d="M8 8h10v10.500H8z" fill="#b5b5b5" />
      </Ico>
    ),
  },
  {
    name: "Chat",
    icon: (
      <Ico>
        <defs>
          <linearGradient id="chat" x1="0" y1="0" x2="0" y2="1">
            <stop stopColor="#8c8fd4" />
            <stop offset="1" stopColor="#5a55cf" />
          </linearGradient>
        </defs>
        <path d="M13 1.500a11.500 11.500 0 1 1-5 22l-6 1.200 1.300-5.700A11.500 11.500 0 0 1 13 1.500z" fill="url(#chat)" />
        <rect x="6.500" y="8.500" width="9" height="9.500" rx="1.500" fill="#fff" />
        <path d="M16.500 12l3-3v8.500l-3-3z" fill="#fff" />
      </Ico>
    ),
  },
  {
    name: "Mail",
    icon: (
      <Ico>
        <path d="M2 9L13 1l11 8v15H2z" fill="#0a5fb4" />
        <path d="M2 9h22L13 17z" fill="#f4f4f4" />
        <path d="M2 9l11 7.500L24 24H2z" fill="#35b5ee" />
        <path d="M24 9v15l-11-7.500z" fill="#58d0fb" />
      </Ico>
    ),
  },
  {
    name: "File Explorer",
    running: true,
    icon: (
      <Ico>
        <path d="M2 2.500c0-.8.500-1.500 1.500-1.500H9l2.500 3H24v6H2z" fill="#e5a50f" />
        <path d="M2 6.500h8L12 4h12v20H2z" fill="#fdd14d" />
        <path d="M6 24v-5c0-1.500 1-2.500 2.500-2.500h8c1.500 0 2.500 1 2.500 2.500v5z" fill="#0c72bf" />
        <path d="M9.500 20h7" stroke="#0a5a9a" strokeWidth="1.500" />
      </Ico>
    ),
  },
  {
    name: "MyASUS",
    icon: (
      <Ico>
        <defs>
          <linearGradient id="asus" x1="0" y1="1" x2="1" y2="0">
            <stop stopColor="#5a1cff" />
            <stop offset="1" stopColor="#0aa6ff" />
          </linearGradient>
        </defs>
        <path d="M2 0.500h22v24H2z" fill="url(#asus)" />
        <path d="M4 18.500L9.500 7h2.500L6.500 18.500zM9.500 18.500L15 7h2l-5 11.500zM15 18.500l3.500-11.500H20v11.500h-2V13l-1.500 5.500z" fill="#fff" />
      </Ico>
    ),
  },
  {
    name: "Edge",
    icon: (
      <Ico>
        <defs>
          <linearGradient id="edge" x1="0" y1="0" x2="1" y2="0">
            <stop stopColor="#1fa8e8" />
            <stop offset=".5" stopColor="#2ac4d8" />
            <stop offset="1" stopColor="#6bea50" />
          </linearGradient>
        </defs>
        <circle cx="13" cy="12.500" r="11.500" fill="#1468bf" />
        <path d="M1.500 12A11.500 11.500 0 0 1 24.500 12c0 4-3 5.500-6 5.500-2 0-3.500-.7-3-1.500 2-3-.5-7-5-7-5 0-8.500 1.500-9 3z" fill="url(#edge)" />
        <path d="M10 10c-3 3-2.500 9 3 12-6 0-9-5-8-9 .8-2 3-3.500 5-3z" fill="#0d4f9f" />
        <path d="M15.500 16c-.5 2 4 3.500 8 1l1.500 1.500-4 3.500c-5 .5-9-1-9.500-5-.3-2 1-3.500 2.500-4 1 0 2 1.500 1.500 3z" fill="#332033" />
      </Ico>
    ),
  },
  {
    name: "Spotify",
    running: true,
    icon: (
      <Ico>
        <circle cx="13" cy="12.500" r="11.500" fill="#1ed760" />
        <path d="M6 9.200c5-1.400 10-1 14.500 1.500M6.500 13c4.500-1.200 8.500-.8 12.500 1.300M7 16.500c3.500-.9 7-.6 10.300 1.200" stroke="#121212" strokeWidth="2" strokeLinecap="round" />
      </Ico>
    ),
  },
  {
    name: "Chrome",
    running: true,
    icon: (
      <svg width="30" height="26" viewBox="0 0 30 26" fill="none" className="-mr-1 shrink-0 overflow-visible" aria-hidden="true">
        <circle cx="13" cy="13.500" r="10.500" fill="#f5c518" />
        <path d="M13 13.500L3.900 8.250A10.500 10.500 0 0 1 22.100 8.250z" fill="#ea4335" />
        <path d="M13 13.500L3.900 8.250A10.500 10.500 0 0 0 13 24z" fill="#34a853" />
        <circle cx="13" cy="13" r="5" fill="#fff" />
        <circle cx="13" cy="13" r="3.800" fill="#3b7ded" />
        <circle cx="22" cy="3.500" r="7" fill="#0c7a6c" />
        <circle cx="22" cy="3.500" r="4.800" fill="#e81e4f" stroke="#f9a8b4" />
      </svg>
    ),
  },
  {
    name: "Sublime Text",
    running: true,
    icon: (
      <Ico>
        <rect x="2" y="1" width="22" height="24" rx="2" fill="#484848" />
        <path d="M7.500 8.700L18.500 5v4.500L13 11.500l5.500 2v4L7.500 21v-4.200L13 14.800l-5.500-2z" fill="#ff9800" />
      </Ico>
    ),
  },
  {
    name: "Word",
    running: true,
    active: true,
    icon: (
      <Ico>
        <path d="M7 2.500C7 2 7.500 1.500 8 1.500h15c.5 0 1 .5 1 1V7H7z" fill="#41a5ee" />
        <path d="M7 7h17v5.500H7z" fill="#2b7cd3" />
        <path d="M7 12.500h17V18H7z" fill="#185abd" />
        <path d="M7 18h17v4.500c0 .5-.5 1-1 1H8c-.5 0-1-.5-1-1z" fill="#103f91" />
        <rect x="1.500" y="6.500" width="12.500" height="12.500" rx="1" fill="#1b5cbe" />
        <path d="M3.800 9.500l1.700 6.500L7.700 10l2.200 6 1.700-6.500" stroke="#fff" strokeWidth="1.600" />
      </Ico>
    ),
  },
  {
    name: "Photos",
    running: true,
    icon: (
      <Ico>
        <rect x="3" y="1.500" width="20" height="22.500" rx="1" fill="#2da8ea" />
        <path d="M3 16l6.500-7.500L23 24H3z" fill="#123f80" />
        <path d="M13 13l3.500-3 6.500 7v7z" fill="#5d7fd6" />
        <circle cx="17" cy="6.500" r="2" fill="#fff" />
      </Ico>
    ),
  },
];

function Taskbar() {
  return (
    <div className="flex h-12 shrink-0 items-center bg-[linear-gradient(90deg,#1b2533_0%,#242430_11%,#33202b_15%,#4c1722_18%,#47181f_23%,#2d2416_28%,#2a2812_30%,#1f2d1e_33%,#2b2720_37%,#33251a_43%,#3a1f2a_50%,#3a1b35_58%,#461a26_62%,#33202b_66%,#24232c_70%,#1e2530_73%,#25242c_77%,#1d2130_84%,#211f38_90%,#1d2630_95%,#1b3026_100%)] text-[12px] text-white">
      <button type="button" className="flex flex-1 items-center gap-2 pl-5 text-left">
        <Svg w={23} h={22}>
          <path d="M10 1c4 2 5 7 1 11H3L1 8c4 .5 8-2 9-7z" fill="#fbbf24" stroke="none" />
          <path d="M6 20.500a4.500 4.500 0 0 1-.5-9 6 6 0 0 1 11-.5 5 5 0 0 1 1.500 9.500z" fill="#cfe3f7" stroke="none" />
        </Svg>
        <span className="flex flex-col pt-0.5 leading-4">
          <span>82°F</span>
          <span className="text-[#c4c2c8]">Mostly cloudy</span>
        </span>
      </button>
      <div className="flex pl-0.5">
        {apps.map((a) => (
          <button
            type="button"
            key={a.name}
            aria-label={a.name}
            className="flex h-12 w-11 flex-col items-center justify-center"
          >
            <span
              className={`flex h-10 w-9 flex-col items-center justify-between rounded pt-[7px] ${a.active ? "bg-white/10 outline outline-white/5" : ""}`}
            >
              {a.icon}
              {a.running && <span className={`h-[3px] rounded-full ${a.active ? "w-3.5 bg-[#0a84ff]" : "w-[5px] bg-[#a09ca0]"}`} />}
            </span>
          </button>
        ))}
      </div>
      <div className="flex flex-1 items-center justify-end pr-[19px]">
        <Btn label="Hidden icons" className="mr-3.5">
          <Svg w={13} h={8}>
            <path d="M1 7l5.500-5.500L12 7" strokeWidth={1.400} />
          </Svg>
        </Btn>
        <Btn label="Network, volume and battery" className="mr-3 gap-2">
          <Svg w={16} h={14}>
            <path d="M1 5a10 10 0 0 1 14 0M3.300 7.500a6.800 6.800 0 0 1 9.400 0M5.500 10a3.600 3.600 0 0 1 5 0" strokeWidth={1.400} />
            <circle cx="8" cy="12" r="1.300" fill="currentColor" />
          </Svg>
          <Svg w={16} h={14}>
            <path d="M1 5v4h2.500L7 12.500v-11L3.500 5zM9 5c1.200 1 1.200 3 0 4" strokeWidth={1.200} />
            <path d="M11 3c2.200 2 2.200 6 0 8M13 1.500c3 3 3 8 0 11" stroke="#777" strokeWidth={1.200} />
          </Svg>
          <Svg w={17} h={12}>
            <rect x="1" y="1.500" width="13" height="9" rx="1.500" strokeWidth={1.300} />
            <rect x="3" y="3.500" width="6" height="5" fill="currentColor" stroke="none" />
            <path d="M15.500 4v4" strokeWidth={1.500} />
          </Svg>
        </Btn>
        <button type="button" className="flex flex-col text-right leading-4">
          <span>7:52 PM</span>
          <span>5/28/2022</span>
        </button>
      </div>
    </div>
  );
}

function CounterBadge() {
  return (
    <div className="absolute right-[25px] bottom-[31px] flex size-[39px] items-center justify-center rounded-full rounded-bl-none bg-[#1d2340]">
      <svg width="5" height="7" viewBox="0 0 5 7" className="absolute bottom-0.5 left-0.5" aria-hidden="true">
        <path d="M0 0h1v1H0zM3 0h1v1H3zM0 2h1v1H0zM3 2h1v1H3zM0 4h1v1H0zM3 4h1v1H3z" fill="#fff" />
      </svg>
      <span className="flex size-8 items-center justify-center rounded-full bg-[#eef1fb] p-0.5">
        <span className="flex size-7 items-center justify-center rounded-full border-2 border-[#f4455f] text-[15px] font-bold text-[#1d2340]">
          4
        </span>
      </span>
    </div>
  );
}

export default function App() {
  return (
    <div className="relative flex h-screen flex-col overflow-hidden bg-[#e6e6e6] font-['Open_Sans','Noto_Sans',sans-serif]">
      <TitleBar />
      <div className="shrink-0 bg-[#f3f2f1] text-[#444]">
        <RibbonTabs />
        <div className="flex h-[94px] text-[11px] text-[#3b3a39]">
          <ClipboardGroup />
          <Divider />
          <FontGroup />
          <Divider />
          <ParagraphGroup />
          <Divider />
          <StylesGroup />
          <Divider />
          <EditingGroup />
          <Divider />
          <div className="flex w-[78px] items-end justify-end pr-2 pb-1.5">
            <Btn label="Collapse ribbon" className="h-4 w-4">
              <Svg w={11} h={7}>
                <path d="M1 1l4.500 4.500L10 1" strokeWidth={1.300} />
              </Svg>
            </Btn>
          </div>
        </div>
      </div>
      <div className="flex min-h-0 flex-1 bg-linear-to-b from-[#cdcdcd] to-[#e6e6e6] to-[5px]">
        <NavigationPane />
        <DocumentArea />
      </div>
      <StatusBar />
      <Taskbar />
      <CounterBadge />
    </div>
  );
}
